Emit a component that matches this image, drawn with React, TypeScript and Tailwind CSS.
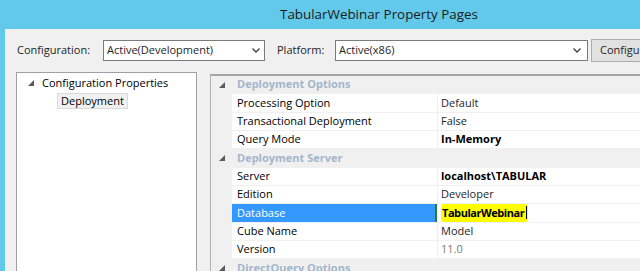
import React from "react";

const font = { fontFamily: '"Open Sans", "Noto Sans", sans-serif' };

function Chevron() {
  return (
    <svg width="8" height="5" viewBox="0 0 8 5" className="shrink-0">
      <path d="M0.5 0.5 L4 4 L7.5 0.5" fill="none" stroke="#3c3c3c" strokeWidth="1.3" />
    </svg>
  );
}

function Expander() {
  return (
    <svg width="6" height="6" viewBox="0 0 6 6" className="shrink-0">
      <path d="M6 0 L6 6 L0 6 Z" fill="#5a5a5a" />
    </svg>
  );
}

type Row =
  | { kind: "cat"; label: string }
  | { kind: "prop"; name: string; value: string; bold?: boolean; muted?: boolean; selected?: boolean };

const rows: Row[] = [
  { kind: "cat", label: "Deployment Options" },
  { kind: "prop", name: "Processing Option", value: "Default" },
  { kind: "prop", name: "Transactional Deployment", value: "False" },
  { kind: "prop", name: "Query Mode", value: "In-Memory", bold: true },
  { kind: "cat", label: "Deployment Server" },
  { kind: "prop", name: "Server", value: "localhost\\TABULAR", bold: true },
  { kind: "prop", name: "Edition", value: "Developer" },
  { kind: "prop", name: "Database", value: "TabularWebinar", bold: true, selected: true },
  { kind: "prop", name: "Cube Name", value: "Model" },
  { kind: "prop", name: "Version", value: "11.0", muted: true },
  { kind: "cat", label: "DirectQuery Options" },
];

function GridRow({ row }: { row: Row }) {
  if (row.kind === "cat") {
    return (
      <div className="flex h-[17.33px] shrink-0 items-center">
        <div className="flex w-[21px] justify-center pl-[1px]">
          <Expander />
        </div>
        <span className="pl-[5px] text-[11px] font-bold text-[#a3b6cc]">{row.label}</span>
      </div>
    );
  }
  return (
    <div className="flex h-[17.33px] shrink-0">
      <div className="w-[21px] shrink-0" />
      <div
        className={
          row.selected
            ? "flex w-[203px] shrink-0 items-center bg-[#3399ff] pl-[5px] text-[11px] text-white"
            : "flex w-[205px] shrink-0 items-center bg-white pl-[5px] text-[11px] text-black"
        }
      >
        {row.name}
      </div>
      {row.selected ? <div className="w-[2px] shrink-0 bg-[#2f7a3a]" /> : null}
      <div className="w-px shrink-0" />
      <div className="flex flex-1 items-center bg-white pl-[3px] text-[11px]">
        {row.selected ? (
          <span className="flex h-full items-center rounded-[3px] bg-[#ffff00] pl-px pr-px font-bold tracking-[-0.45px] text-black">
            {row.value}
            <span className="ml-[2px] h-[13px] w-px bg-black" />
          </span>
        ) : (
          <span
            className={
              row.muted
                ? "text-[#7a7a7a]"
                : row.bold
                  ? "font-bold text-black"
                  : "text-[#1e1e1e]"
            }
          >
            {row.value}
          </span>
        )}
      </div>
    </div>
  );
}

export default function App() {
  return (
    <div className="flex h-[271px] w-[640px] flex-col overflow-hidden bg-[#62c9ea]" style={font}>
      <div className="flex h-[29px] shrink-0 items-center pl-[280px] text-[13.4px] text-[#1b1b1b]">
        TabularWebinar Property Pages
      </div>

      <div className="ml-[5px] flex flex-1 flex-col bg-[#f0f0f0]">
        <div className="mt-[11px] flex h-[21px] items-center text-[11px] text-[#1e1e1e]">
          <span className="ml-[12px] w-[86px] shrink-0">Configuration:</span>
          <div className="flex h-full w-[162px] shrink-0 items-center justify-between border border-[#7a7a7a] bg-white pl-[3px] pr-[4px]">
            <span>Active(Development)</span>
            <Chevron />
          </div>
          <span className="ml-[12px] w-[58px] shrink-0">Platform:</span>
          <div className="flex h-full w-[253px] shrink-0 items-center justify-between border border-[#7a7a7a] bg-white pl-[3px] pr-[6px]">
            <span>Active(x86)</span>
            <Chevron />
          </div>
          <div className="ml-[3px] flex h-[23px] w-[150px] shrink-0 items-center whitespace-nowrap border border-[#adadad] bg-[#e1e1e1] pl-[8px]">
            Configuration Manager...
          </div>
        </div>

        <div className="mt-[11px] flex flex-1 items-start">
          <div className="ml-[11px] flex h-[210px] w-[181px] shrink-0 flex-col border border-[#a0a0a0] bg-white">
            <div className="mt-[2px] flex h-[16px] items-center text-[11px] text-black">
              <div className="ml-[11px] w-[14px]">
                <Expander />
              </div>
              <span>Configuration Properties</span>
            </div>
            <div className="ml-[40px] mt-[2px] flex h-[16px] w-fit items-center border border-[#dadada] bg-[#f0f0f0] px-[3px] text-[11px] text-black">
              Deployment
            </div>
          </div>

          <div className="ml-[13px] mt-[2px] flex flex-1 flex-col border-l border-t-2 border-l-[#b4b4b4] border-t-[#a5a5a5] bg-[#f0f0f0]">
            <div className="flex flex-col gap-y-px">
              {rows.map((r, i) => (
                <GridRow key={i} row={r} />
              ))}
            </div>
          </div>
        </div>
      </div>
    </div>
  );
}
